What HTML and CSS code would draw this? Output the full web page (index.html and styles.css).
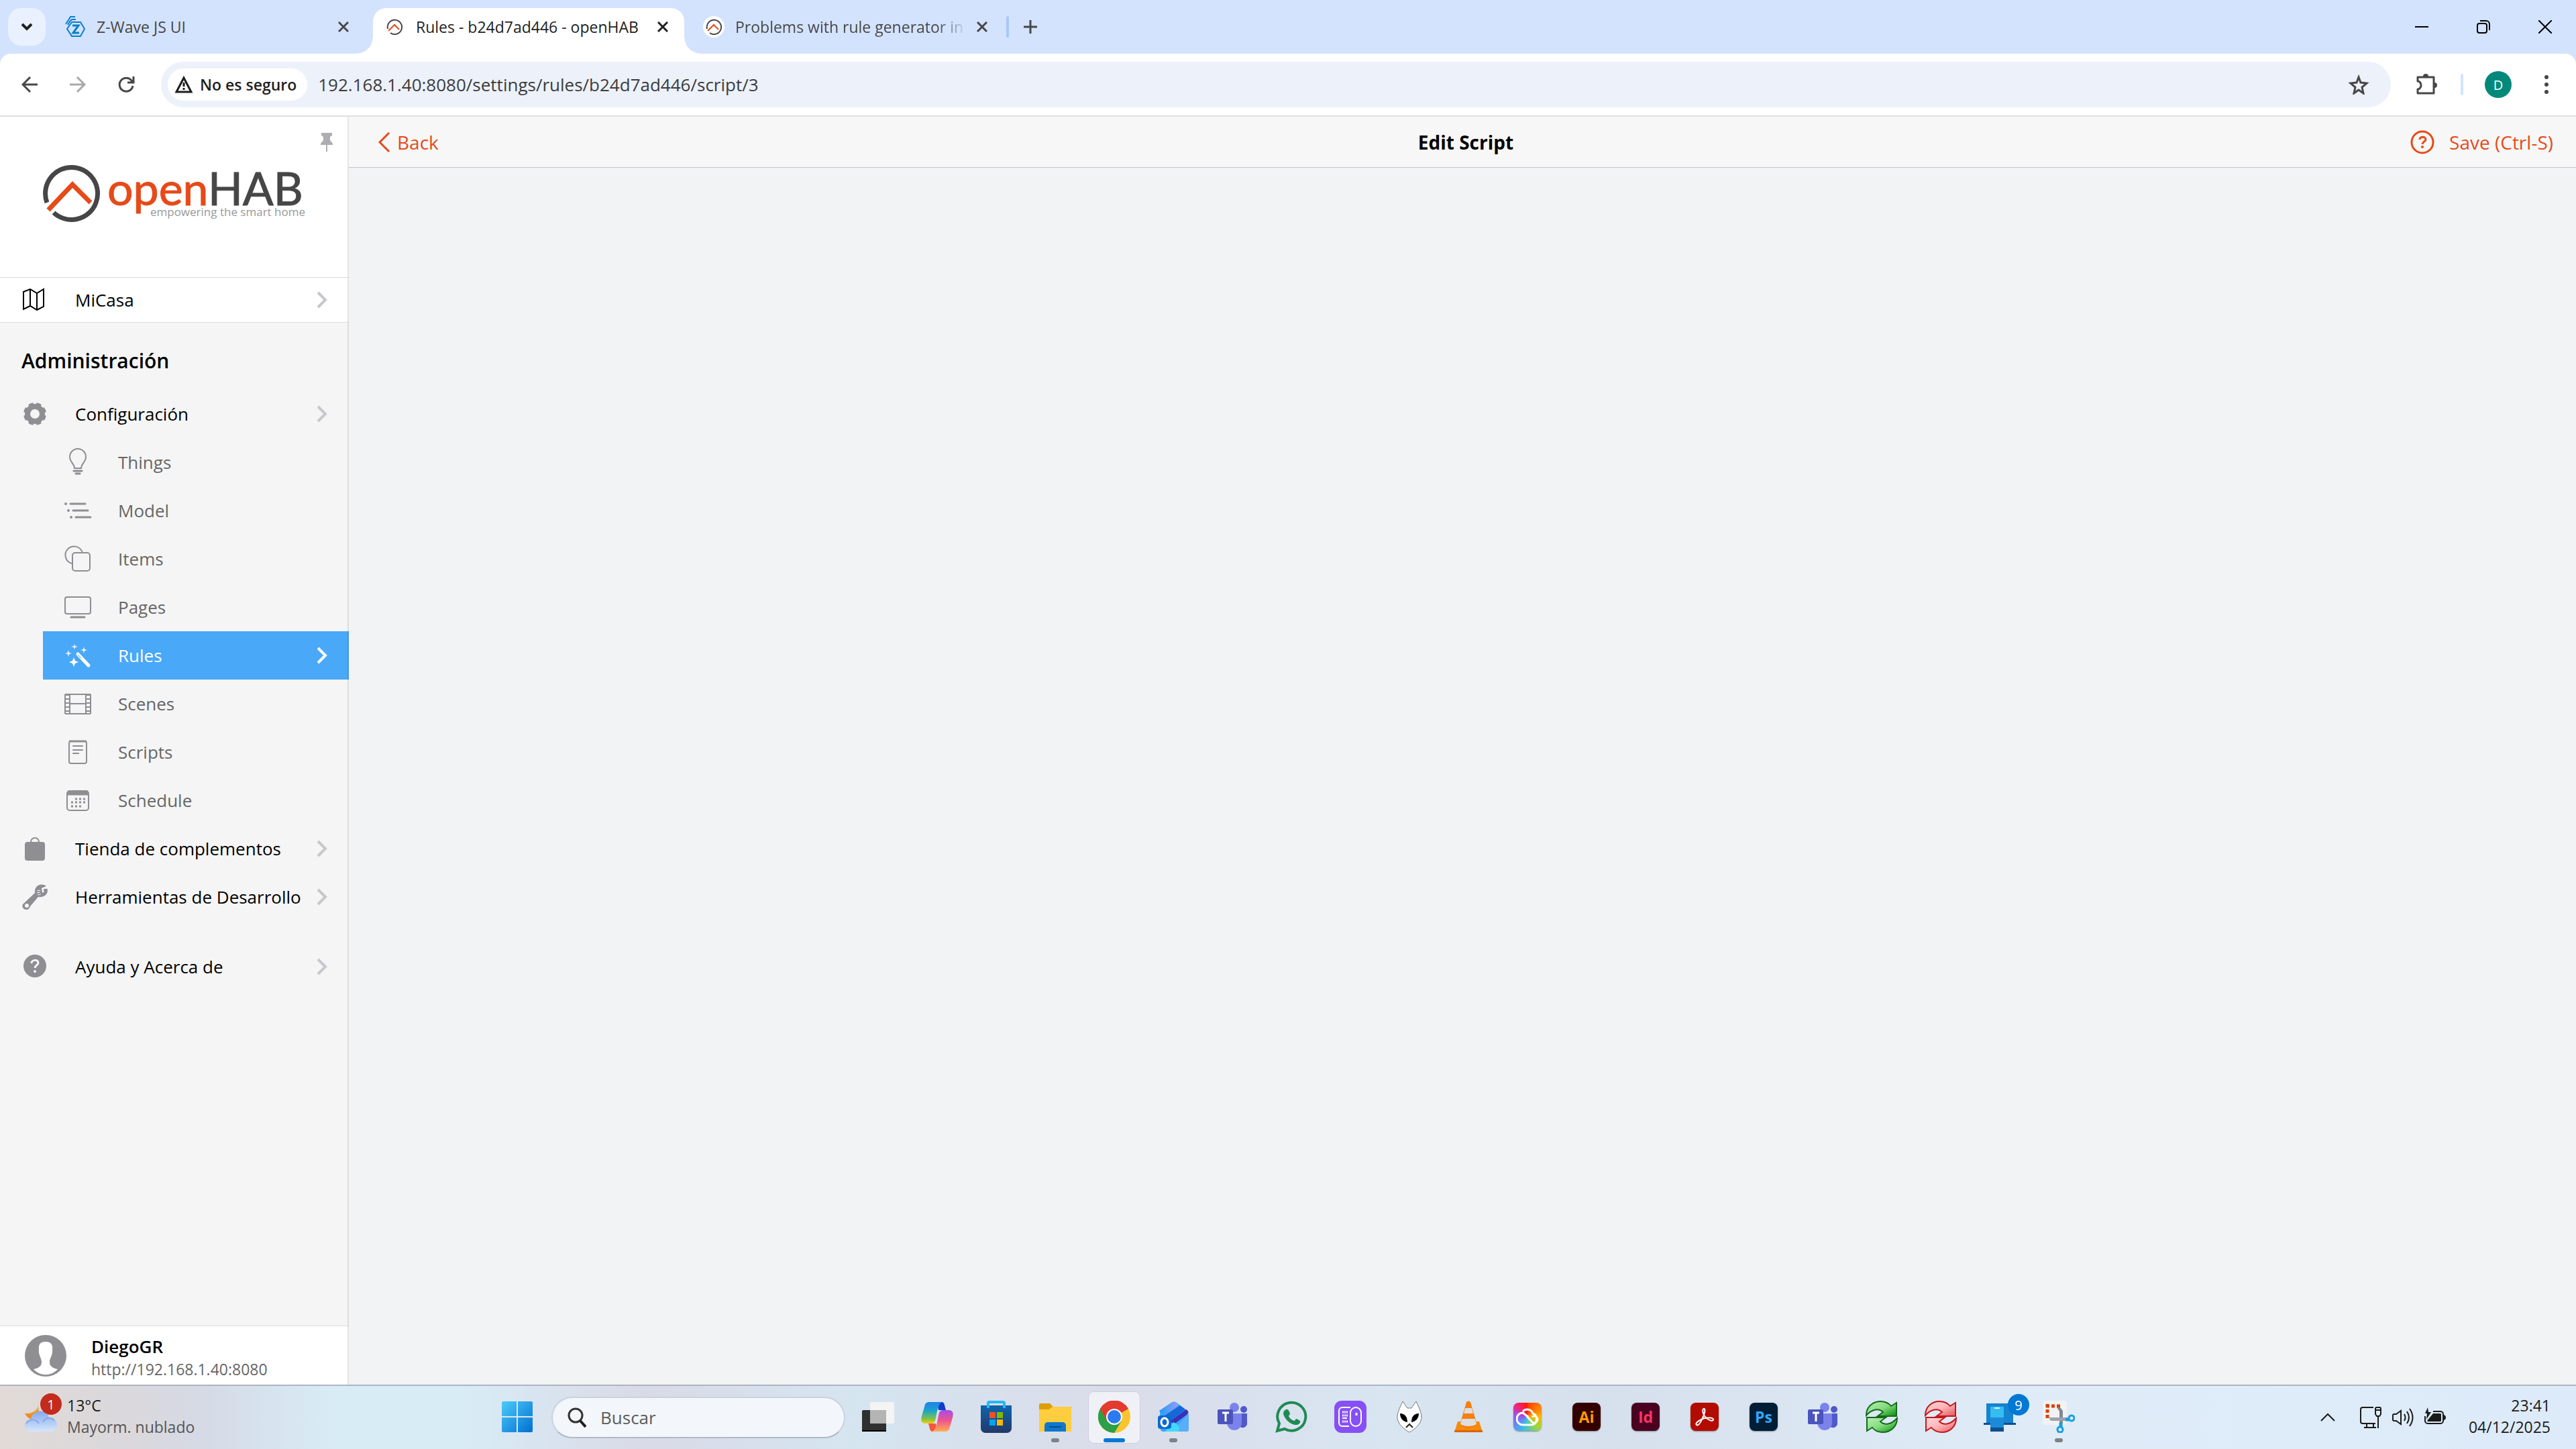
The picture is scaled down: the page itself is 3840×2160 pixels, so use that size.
FILE: index.html
```
<!DOCTYPE html>
<html lang="es">
	<head>
		<title>Rules - b24d7ad446 - openHAB</title>
		<meta charset="UTF-8">
		<meta name="viewport" content="width=device-width, initial-scale=1.0">
		<link rel="stylesheet" href="styles.css">
	</head>
	<body>
		<!-- shared icons -->
		<svg class="sprite" aria-hidden="true">
			<defs>
				<linearGradient id="green" x1="0" y1="0" x2="1" y2="1"><stop offset="0" stop-color="#b9f0b4"/><stop offset=".5" stop-color="#86dc80"/><stop offset="1" stop-color="#078a0b"/></linearGradient>
				<linearGradient id="red" x1="0" y1="0" x2="1" y2="1"><stop offset="0" stop-color="#ffd9da"/><stop offset=".5" stop-color="#ffb5b8"/><stop offset="1" stop-color="#e2545a"/></linearGradient>
			</defs>
			<symbol id="i-close" viewBox="0 0 16 16"><path d="M1 1l14 14M15 1L1 15" fill="none" stroke="currentColor" stroke-width="3"/></symbol>
			<symbol id="i-chevron" viewBox="0 0 16 26"><path d="M2 2l11 11L2 24" fill="none" stroke="currentColor" stroke-width="4"/></symbol>
			<symbol id="i-openhab" viewBox="0 0 24 24">
				<path d="M2 15A10.700 10.700 0 1 1 6 21" fill="none" stroke="#464646" stroke-width="2"/>
				<path d="M3 18l9-9 7 7" fill="none" stroke="#e64a19" stroke-width="2"/>
			</symbol>
			<symbol id="i-teams" viewBox="0 0 48 48">
				<circle cx="27" cy="10" r="7" fill="#7b83eb"/>
				<circle cx="41" cy="13" r="5" fill="#5059c9"/>
				<path d="M33 19h13v13a6 6 0 0 1-13 3z" fill="#5059c9"/>
				<path d="M16 19h22v14a11 11 0 0 1-22 0z" fill="#7b83eb"/>
				<rect x="2" y="13" width="23" height="22" rx="2" fill="#4b53bc"/>
				<path d="M9 18h10M14 18v13" stroke="#fff" stroke-width="3" fill="none"/>
			</symbol>
			<symbol id="i-sync" viewBox="0 0 48 48">
				<path d="M1 22C1 8 12 1 22 1c7 0 12 2 16 7l8-5v20H18l8-6c-6-6-16-5-25 5z" stroke-width="2"/>
				<path d="M47 26C47 40 36 47 26 47c-7 0-12-2-16-7l-8 5V25h28l-8 6c6 6 16 5 25-5z" stroke-width="2"/>
			</symbol>
		</svg>

		<div class="browser">
			<div class="tabstrip">
				<button class="tab-search" aria-label="Buscar pestañas">
					<svg width="18" height="14" viewBox="0 0 18 14"><path d="M2 3l7 7 7-7" fill="none" stroke="#1f1f1f" stroke-width="4"/></svg>
				</button>
				<div class="tab tab-first">
					<svg class="favicon" viewBox="0 0 32 32" fill="none" stroke="#0b7fc9" stroke-width="2">
						<path d="M11 9h13l6 10-6 11H11L4 19z"/><path d="M2 12L6 6l3-5h7M5 13l3-5 3-3h6"/><path d="M12 14h9l-8 11h9" stroke-width="3"/>
					</svg>
					<span class="tab-title">Z-Wave JS UI</span>
					<button class="tab-close" aria-label="Cerrar"><svg width="16" height="16"><use href="#i-close"/></svg></button>
				</div>
				<div class="tab tab-active">
					<svg class="favicon" viewBox="-4 -4 32 32"><use href="#i-openhab" width="24" height="24"/></svg>
					<span class="tab-title">Rules - b24d7ad446 - openHAB</span>
					<button class="tab-close" aria-label="Cerrar"><svg width="16" height="16"><use href="#i-close"/></svg></button>
				</div>
				<div class="tab tab-last">
					<svg class="favicon" viewBox="-4 -4 32 32"><circle cx="12" cy="12" r="16" fill="#fff"/><use href="#i-openhab" width="24" height="24"/></svg>
					<span class="tab-title tab-fade">Problems with rule generator in</span>
					<button class="tab-close" aria-label="Cerrar"><svg width="16" height="16"><use href="#i-close"/></svg></button>
				</div>
				<span class="tab-divider"></span>
				<button class="tab-new" aria-label="Nueva pestaña">
					<svg width="20" height="20" viewBox="0 0 20 20"><path d="M10 0v20M0 10h20" stroke="#474747" stroke-width="3"/></svg>
				</button>
				<div class="window-buttons">
					<button aria-label="Minimizar"><svg width="20" height="20"><path d="M0 10h20" stroke="#000" stroke-width="2"/></svg></button>
					<button aria-label="Restaurar"><svg width="20" height="20" fill="none" stroke="#000" stroke-width="2"><rect x="1" y="5" width="14" height="14" rx="3"/><path d="M5 1h9a5 5 0 0 1 5 5v9"/></svg></button>
					<button aria-label="Cerrar ventana"><svg width="20" height="20"><path d="M0 0l20 20M20 0L0 20" stroke="#000" stroke-width="2"/></svg></button>
				</div>
			</div>

			<div class="toolbar">
				<button class="tool" aria-label="Atrás"><svg width="24" height="24" viewBox="0 0 24 24" fill="none" stroke="#474747" stroke-width="3"><path d="M24 12H2M13 1L2 12l11 11"/></svg></button>
				<button class="tool" aria-label="Adelante"><svg width="24" height="24" viewBox="0 0 24 24" fill="none" stroke="#a9a9a9" stroke-width="3"><path d="M0 12h22M11 1l11 11-11 11"/></svg></button>
				<button class="tool" aria-label="Recargar"><svg width="26" height="26" viewBox="0 0 26 26" fill="none" stroke="#474747" stroke-width="3"><path d="M23 15a10 10 0 1 1-2-8l2 3M24 1v9h-9"/></svg></button>
				<div class="omnibox">
					<button class="chip">
						<svg width="28" height="26" viewBox="0 0 28 26"><path d="M14 3L3 24h22z" fill="none" stroke="#1f1f1f" stroke-width="3"/><path d="M14 10v6M14 18v3" stroke="#1f1f1f" stroke-width="3"/></svg>
						No es seguro
					</button>
					<input class="url" type="text" aria-label="Dirección" value="192.168.1.40:8080/settings/rules/b24d7ad446/script/3">
					<button class="star" aria-label="Añadir a marcadores"><svg width="32" height="30" viewBox="0 0 32 30"><path d="M16 4l3 8 9 1-7 6 2 9-7-5-7 5 2-9-7-6 9-1z" fill="none" stroke="#474747" stroke-width="3"/></svg></button>
				</div>
				<button class="tool-ext" aria-label="Extensiones"><svg width="34" height="34" viewBox="0 0 34 34"><path d="M4 6h24v24H4v-6a5 6 0 0 0 0-12z" fill="none" stroke="#474747" stroke-width="3" stroke-linejoin="round"/><path d="M12 5a4 4 0 0 1 8 0zM29 14a4 4 0 0 1 0 8z" fill="#474747"/></svg></button>
				<span class="tool-divider"></span>
				<button class="profile">D</button>
				<button class="dots" aria-label="Menú"><svg width="6" height="28" fill="#474747"><circle cx="3" cy="3" r="3"/><circle cx="3" cy="14" r="3"/><circle cx="3" cy="25" r="3"/></svg></button>
			</div>
		</div>

		<div class="app">
			<aside class="sidebar">
				<div class="brand">
					<button class="pin" aria-label="Fijar"><svg width="18" height="28" viewBox="0 0 18 28" fill="#aeaeb2"><path d="M1 0h16v4l-3 2v5l4 5v2H0v-2l4-5V6L1 4z"/><path d="M8 18h2v10H8z"/></svg></button>
					<svg class="logo" width="400" height="100" viewBox="0 0 400 100">
						<path d="M10 62A39 39 0 1 1 20 77" fill="none" stroke="#464646" stroke-width="7"/>
						<path d="M12 73l36-38 27 27" fill="none" stroke="#e64a19" stroke-width="7"/>
						<text x="100" y="66" class="logo-name"><tspan fill="#e64a19" stroke="#e64a19">open</tspan><tspan fill="#464646" stroke="#464646">HAB</tspan></text>
						<text x="395" y="82" text-anchor="end" class="logo-tag">empowering the smart home</text>
					</svg>
				</div>
				<a href="#" class="row row-home">
					<svg class="row-icon" viewBox="2 0 48 48"><path d="M9 12l10-4 10 6 10-6v26l-10 5-10-6-10 5zM19 8v25M29 14v25" fill="none" stroke="#000" stroke-width="2"/></svg>
					<span>MiCasa</span><svg class="row-arrow"><use href="#i-chevron"/></svg>
				</a>
				<nav>
					<h2>Administración</h2>
					<a href="#" class="row">
						<svg class="row-icon" viewBox="0 0 48 48"><circle cx="24" cy="24" r="11" fill="none" stroke="#8e8e93" stroke-width="8"/><circle cx="24" cy="24" r="15" fill="none" stroke="#8e8e93" stroke-width="4" pathLength="16" stroke-dasharray="1.200 .8" stroke-dashoffset="-.4"/></svg>
						<span>Configuración</span><svg class="row-arrow"><use href="#i-chevron"/></svg>
					</a>
					<a href="#" class="row sub">
						<svg class="row-icon" viewBox="0 0 48 48" fill="none" stroke="#8e8e93" stroke-width="2"><path d="M19 33c0-7-7-9-7-17a12 12 0 0 1 24 0c0 8-7 10-7 17z"/><path d="M18 37h12M21 41h6" stroke-width="3" stroke-linecap="round"/></svg>
						<span>Things</span>
					</a>
					<a href="#" class="row sub">
						<svg class="row-icon" viewBox="0 0 48 48" fill="none" stroke="#8e8e93" stroke-width="3" stroke-linecap="round"><path d="M13 14h22M17 24h22M21 34h22"/><path d="M6 14h0M10 24h0M14 34h0" stroke-width="4"/></svg>
						<span>Model</span>
					</a>
					<a href="#" class="row sub">
						<svg class="row-icon" viewBox="0 0 48 48" fill="none" stroke="#8e8e93" stroke-width="2"><path d="M15 31A13 13 0 1 1 31 15"/><rect x="16" y="15" width="26" height="27" rx="4"/></svg>
						<span>Items</span>
					</a>
					<a href="#" class="row sub">
						<svg class="row-icon" viewBox="0 0 48 48" fill="none" stroke="#8e8e93" stroke-width="2"><rect x="5" y="9" width="38" height="25" rx="3"/><path d="M14 39h20" stroke-width="3" stroke-linecap="round"/></svg>
						<span>Pages</span>
					</a>
					<a href="#" class="row sub selected">
						<svg class="row-icon" viewBox="0 0 48 48" fill="#fff"><path d="M19 7l1 3 4 1-4 1-1 3-1-3-4-1 4-1zM33 11l1 4 4 1-4 1-1 4-1-4-4-1 4-1zM10 16l1 4 4 1-4 1-1 4-1-4-4-1 4-1zM18 27l2 5 5 2-5 2-2 5-2-5-5-2 5-2z"/><path d="M24 22l16 17" stroke="#fff" stroke-width="5" stroke-linecap="round"/><path d="M24 23l5 5" stroke="#49a8f8" stroke-width="1"/></svg>
						<span>Rules</span><svg class="row-arrow"><use href="#i-chevron"/></svg>
					</a>
					<a href="#" class="row sub">
						<svg class="row-icon" viewBox="0 0 48 48" fill="none" stroke="#8e8e93" stroke-width="2"><rect x="5" y="10" width="38" height="29" rx="1"/><path d="M12 10v29M36 10v29M12 24h24"/><path d="M8 10v29M40 10v29" stroke-width="6" stroke-dasharray="2 4"/></svg>
						<span>Scenes</span>
					</a>
					<a href="#" class="row sub">
						<svg class="row-icon" viewBox="0 0 48 48" fill="none" stroke="#8e8e93" stroke-width="2"><rect x="11" y="8" width="26" height="33" rx="3"/><path d="M11 8h26" stroke-width="3"/><path d="M17 15h14M17 21h14M17 26h8" stroke-linecap="round"/></svg>
						<span>Scripts</span>
					</a>
					<a href="#" class="row sub">
						<svg class="row-icon" viewBox="0 0 48 48" fill="none" stroke="#8e8e93" stroke-width="2"><rect x="8" y="10" width="32" height="29" rx="4"/><path d="M9 13h30" stroke-width="7"/><path d="M20 22h15M14 27h21M14 33h15" stroke-width="3" stroke-dasharray="3 3"/></svg>
						<span>Schedule</span>
					</a>
					<a href="#" class="row">
						<svg class="row-icon" viewBox="0 0 48 48"><rect x="9" y="14" width="30" height="28" rx="4" fill="#8e8e93"/><path d="M18 15v-1a6 6 0 0 1 12 0v1" fill="none" stroke="#8e8e93" stroke-width="2"/></svg>
						<span>Tienda de complementos</span><svg class="row-arrow"><use href="#i-chevron"/></svg>
					</a>
					<a href="#" class="row">
						<svg class="row-icon" viewBox="0 0 48 48"><path d="M6 35l18-17C23 8 32 2 41 8l-7 3 1 7 8-4c0 7-6 11-14 10L17 38c-1 5-6 6-9 4-3-2-3-5-2-7z" fill="#8e8e93"/><circle cx="12" cy="37" r="3" fill="#f5f5f5"/><path d="M27 15l5-1M27 18l5-1M28 21l5-1" stroke="#f5f5f5"/><path d="M37 12l6 0-1 4-4 3z" fill="#8e8e93"/></svg>
						<span>Herramientas de Desarrollo</span><svg class="row-arrow"><use href="#i-chevron"/></svg>
					</a>
					<a href="#" class="row row-help">
						<svg class="row-icon" viewBox="0 0 48 48"><circle cx="24" cy="23" r="17" fill="#8e8e93"/><path d="M19 19c0-6 10-6 10-1 0 4-5 4-5 8" fill="none" stroke="#f5f5f5" stroke-width="3"/><circle cx="24" cy="31" r="2" fill="#f5f5f5"/></svg>
						<span>Ayuda y Acerca de</span><svg class="row-arrow"><use href="#i-chevron"/></svg>
					</a>
				</nav>
				<a href="#" class="user">
					<svg width="62" height="62" viewBox="0 0 62 62"><circle cx="31" cy="31" r="31" fill="#8e8e93"/><path d="M31 10c7 0 11 4 10 11 1 10-4 13-4 19 0 5 2 9 12 11-10 11-26 11-36 0 10-2 12-6 12-11 0-6-5-9-4-19-1-7 3-11 10-11z" fill="#fff"/></svg>
					<span class="user-text"><strong>DiegoGR</strong><small>http://192.168.1.40:8080</small></span>
				</a>
			</aside>
			<main>
				<header class="navbar">
					<a href="#" class="nav-link nav-back"><svg width="18" height="30" viewBox="0 0 18 30"><path d="M16 1L2 15l14 14" fill="none" stroke="#e64a19" stroke-width="3"/></svg>Back</a>
					<h1>Edit Script</h1>
					<div class="nav-right">
						<a href="#" class="nav-link" aria-label="Ayuda"><svg width="36" height="36" viewBox="0 0 36 36"><circle cx="18" cy="18" r="16" fill="none" stroke="#e64a19" stroke-width="3"/><path d="M14 14c0-5 9-5 9 0 0 3-5 3-5 7" fill="none" stroke="#e64a19" stroke-width="3"/><circle cx="18" cy="25" r="2" fill="#e64a19"/></svg></a>
						<a href="#" class="nav-link">Save (Ctrl-S)</a>
					</div>
				</header>
			</main>
		</div>

		<footer class="taskbar">
			<button class="weather">
				<span class="weather-icon">
					<svg width="48" height="48" viewBox="0 0 48 48">
						<defs><linearGradient id="cloud" x1="0" y1="0" x2="0" y2="1"><stop offset="0" stop-color="#84a9ee"/><stop offset="1" stop-color="#d6e6fb"/></linearGradient><linearGradient id="moon" x1="0" y1="0" x2="0" y2="1"><stop offset="0" stop-color="#f7c530"/><stop offset="1" stop-color="#ee7f1c"/></linearGradient></defs>
						<path d="M19 0c3 10-4 19-19 18 4 8 13 12 22 5z" fill="url(#moon)"/>
						<path d="M9 45a9 9 0 0 1 0-18C11 12 32 10 36 24c15-1 16 21 2 21z" fill="url(#cloud)"/>
						<path d="M2 33c5-8 15-7 19 0M27 31c3-7 11-8 17-3" fill="none" stroke="#86a8ea" stroke-width="2"/>
					</svg>
					<span class="badge badge-red">1</span>
				</span>
				<span class="weather-text"><span>13°C</span><span class="muted">Mayorm. nublado</span></span>
			</button>

			<div class="apps">
				<button class="task" aria-label="Inicio"><svg width="46" height="46" viewBox="0 0 46 46"><defs><linearGradient id="win" x1="0" y1="0" x2="1" y2="1"><stop offset="0" stop-color="#4ccbfb"/><stop offset="1" stop-color="#0070cf"/></linearGradient></defs><path d="M2 0h20v22H0V2a2 2 0 0 1 2-2zM24 0h20a2 2 0 0 1 2 2v20H24zM0 24h22v22H2a2 2 0 0 1-2-2zM24 24h22v20a2 2 0 0 1-2 2H24z" fill="url(#win)"/></svg></button>
				<label class="search">
					<svg width="28" height="30" viewBox="0 0 28 30"><circle cx="12" cy="12" r="10" fill="none" stroke="#333" stroke-width="3"/><path d="M19 20l8 9" stroke="#1f1f1f" stroke-width="4"/></svg>
					<input type="text" placeholder="Buscar" aria-label="Buscar">
				</label>
				<button class="task" aria-label="Vista de tareas"><svg width="48" height="48" viewBox="0 0 48 48"><rect x="0" y="14" width="36" height="32" rx="2" fill="#303030"/><path d="M0 44h36v2H0z" fill="#000"/><rect x="12" y="2" width="36" height="32" rx="2" fill="#f4f4f4"/><path d="M12 14h24v20H12z" fill="#b4b4b4"/></svg></button>
				<button class="task" aria-label="Copilot"><svg width="48" height="48" viewBox="0 0 48 48"><defs><linearGradient id="cp1" x1="0" y1="0" x2="0" y2="1"><stop offset="0" stop-color="#2480e8"/><stop offset=".4" stop-color="#18a5cb"/><stop offset=".8" stop-color="#86c440"/><stop offset="1" stop-color="#f8cb18"/></linearGradient><linearGradient id="cp2" x1="0" y1="0" x2="0" y2="1"><stop offset="0" stop-color="#a64be8"/><stop offset=".5" stop-color="#f0558b"/><stop offset="1" stop-color="#fcb055"/></linearGradient></defs><path d="M24 2h7c4 0 4 5 6 12H26z" fill="#0f3cc9"/><path d="M24 46h-7c-4 0-4-5-6-12h11z" fill="#f4573a"/><path d="M12 2h19c-6 4-7 14-9 24-1 6-3 8-7 8H7c-6 0-8-4-6-11L5 9c1-5 3-7 7-7z" fill="url(#cp1)"/><path d="M36 46H17c6-4 7-14 9-24 1-6 3-8 7-8h8c6 0 8 4 6 11l-4 14c-1 5-3 7-7 7z" fill="url(#cp2)"/></svg></button>
				<button class="task" aria-label="Microsoft Store"><svg width="48" height="48" viewBox="0 0 48 48"><defs><linearGradient id="store" x1="0" y1="0" x2="0" y2="1"><stop offset="0" stop-color="#0f65ad"/><stop offset="1" stop-color="#22386a"/></linearGradient></defs><path d="M1 7h46v34a7 7 0 0 1-7 7H8a7 7 0 0 1-7-7z" fill="url(#store)"/><path d="M12 11V4a2 2 0 0 1 2-2h20a2 2 0 0 1 2 2v7" fill="none" stroke="#22b8f5" stroke-width="4"/><path d="M14 17h9v9h-9z" fill="#f25022"/><path d="M25 17h9v9h-9z" fill="#7fba00"/><path d="M14 28h9v9h-9z" fill="#00a4ef"/><path d="M25 28h9v9h-9z" fill="#ffb900"/></svg></button>
				<button class="task running" aria-label="Explorador de archivos"><svg width="48" height="48" viewBox="0 0 48 48"><path d="M0 6a2 2 0 0 1 2-2h14l5 5h27v8H0z" fill="#dd9f08"/><path d="M0 13h15l5-4h26a2 2 0 0 1 2 2v35H0z" fill="#fecd40"/><path d="M8 46V37a5 5 0 0 1 5-5h22a5 5 0 0 1 5 5v9z" fill="#0f78ca"/><path d="M15 39h18" stroke="#0c4a91" stroke-width="2"/></svg></button>
				<button class="task current" aria-label="Google Chrome"><svg width="48" height="48" viewBox="0 0 48 48"><circle cx="24" cy="24" r="24" fill="#fcc42c"/><path d="M24 24L3 12a24 24 0 0 1 42 0z" fill="#e33b2e"/><path d="M3 12a24 24 0 0 0 21 36l11-18-11-6z" fill="#2c9f47"/><path d="M24 12h21a24 24 0 0 0-42 0l10 18z" fill="#e33b2e"/><circle cx="24" cy="24" r="12" fill="#fff"/><circle cx="24" cy="24" r="10" fill="#2b7bf0"/></svg></button>
				<button class="task running" aria-label="Outlook"><svg width="48" height="48" viewBox="0 0 48 48"><defs><linearGradient id="ol" x1="0" y1="0" x2="1" y2="0"><stop offset="0" stop-color="#1e9bf7"/><stop offset="1" stop-color="#9a9df8"/></linearGradient></defs><path d="M4 15L21 3c3-2 5-2 8 0l16 12v27a4 4 0 0 1-4 4H9a4 4 0 0 1-4-4z" fill="#3aa5f7"/><path d="M3 15L21 3c3-2 6-1 8 1l3 3-22 16z" fill="url(#ol)"/><path d="M10 23L34 7l8 6-23 18z" fill="#1767d8"/><path d="M19 31l24-18c5 3 4 6 1 8L25 35z" fill="#3a30b8"/><path d="M22 46l25-27v24a3 3 0 0 1-3 3z" fill="#58aef8"/><path d="M12 46l12-14c9 4 11 9 7 14z" fill="#44d8fb"/><rect x="1" y="22" width="20" height="20" rx="4" fill="#0d69cf"/><ellipse cx="11" cy="32" rx="5" ry="6" fill="none" stroke="#fff" stroke-width="3"/></svg></button>
				<button class="task" aria-label="Teams"><svg width="48" height="48"><use href="#i-teams"/></svg></button>
				<button class="task" aria-label="WhatsApp"><svg width="48" height="48" viewBox="0 0 48 48"><path d="M3 45l3-11a21 21 0 1 1 8 8z" fill="none" stroke="#1f8a53" stroke-width="4"/><path d="M16 13c3-1 4 1 6 6 0 2-2 3-2 4 2 4 5 6 8 7 2 0 2-3 4-3l5 3c1 4-3 6-6 6-9 0-18-10-19-17 0-3 2-5 4-6z" fill="#1f8a53"/></svg></button>
				<button class="task" aria-label="Control"><svg width="48" height="48" viewBox="0 0 48 48" fill="none" stroke="#fff" stroke-width="2"><rect width="48" height="48" rx="11" fill="#8650f6" stroke="none"/><path d="M22 38H12a5 5 0 0 1-5-5V15a5 5 0 0 1 5-5h12"/><rect x="24" y="10" width="16" height="28" rx="8"/><path d="M33 18v4" stroke-width="3"/><path d="M12 17h9M12 22h9M12 31h9" stroke-width="3" stroke-dasharray="2 1"/><path d="M12 26h7" stroke-width="2"/></svg></button>
				<button class="task" aria-label="foobar2000"><svg width="48" height="48" viewBox="0 0 48 48"><path d="M14 1l7 10h6l7-10c3 7 8 15 8 24 0 10-11 18-18 22C17 43 6 35 6 25 6 16 11 8 14 1z" fill="#fff" stroke="#777"/><path d="M10 19c7 0 11 5 11 13-6-1-11-5-11-13zM38 19c-7 0-11 5-11 13 6-1 11-5 11-13z" fill="#000"/><path d="M19 40l5-5 5 5" fill="none" stroke="#222" stroke-width="2"/></svg></button>
				<button class="task" aria-label="VLC"><svg width="48" height="48" viewBox="0 0 48 48"><path d="M8 31h32l5 16H3z" fill="#f88a0c"/><path d="M3 44h42v3H3z" fill="#db6500"/><path d="M21 2q3-3 6 0l10 34c-4 6-22 6-26 0z" fill="#f58011"/><path d="M19 11h10l2 8H17zM14 27h20l2 8c-6 4-18 4-24 0z" fill="#dedede"/></svg></button>
				<button class="task" aria-label="Creative Cloud"><span class="tile tile-cc"><svg width="34" height="28" viewBox="0 0 34 28" fill="none" stroke="#fff" stroke-width="3"><path d="M10 6a9 9 0 0 1 15 3 9 9 0 0 1-1 17H10a9 9 0 1 1 0-18l8 6M24 14a5 5 0 1 1 0 8L14 11"/></svg></span></button>
				<button class="task" aria-label="Illustrator"><span class="tile tile-ai">Ai</span></button>
				<button class="task" aria-label="InDesign"><span class="tile tile-id">Id</span></button>
				<button class="task" aria-label="Acrobat"><span class="tile tile-pdf"><svg width="28" height="28" viewBox="0 0 28 28" fill="none" stroke="#fff" stroke-width="2"><path d="M2 26c-3-3 6-8 12-10 5-1 13-1 13 2 0 4-8 1-12-4-4-4-5-12-2-12s1 8-3 16c-2 5-6 10-8 8z"/></svg></span></button>
				<button class="task" aria-label="Photoshop"><span class="tile tile-ps">Ps</span></button>
				<button class="task" aria-label="Teams trabajo"><svg width="48" height="48"><use href="#i-teams"/></svg></button>
				<button class="task" aria-label="Sincronizar"><svg width="48" height="48" fill="url(#green)" stroke="#126b1a"><use href="#i-sync"/></svg></button>
				<button class="task" aria-label="Detener sincronización"><svg width="48" height="48" fill="url(#red)" stroke="#c4161c"><use href="#i-sync"/></svg></button>
				<button class="task" aria-label="Enlace móvil"><svg width="48" height="48" viewBox="0 0 48 48"><path d="M4 4h40v29H4z" fill="#1583d0"/><path d="M0 33h48v3H0z" fill="#0b4f8c"/><rect x="10" y="8" width="20" height="38" rx="1" fill="#1b8bd8"/><path d="M10 9h20v16H10z" fill="#35bdf1"/><path d="M10 40h20v6H10z" fill="#0e4e8d"/><path d="M16 11h8" stroke="#d9f5ff" stroke-width="2"/></svg><span class="badge badge-blue">9</span></button>
				<button class="task running" aria-label="Recortes"><svg width="48" height="48" viewBox="0 0 48 48"><rect x="0" y="0" width="36" height="36" rx="4" fill="#f2f2f2"/><path d="M5 8h21" stroke="#d8410c" stroke-width="5" stroke-dasharray="5 3"/><path d="M7 5v21" stroke="#d8410c" stroke-width="5" stroke-dasharray="5 3"/><path d="M21 10h5l4 5v19h-5V16z" fill="#7e8893"/><path d="M9 25h28v5H12z" fill="#9aa3ad"/><circle cx="43" cy="26" r="4" fill="none" stroke="#159fe0" stroke-width="3"/><circle cx="26" cy="43" r="4" fill="none" stroke="#159fe0" stroke-width="3"/><path d="M27 33v6M34 28h5" stroke="#159fe0" stroke-width="5"/></svg></button>
			</div>

			<div class="tray">
				<button aria-label="Mostrar iconos ocultos"><svg width="22" height="14" viewBox="0 0 22 14"><path d="M1 12L11 2l10 10" fill="none" stroke="#1a1a1a" stroke-width="2"/></svg></button>
				<button class="tray-status" aria-label="Red, volumen y batería">
					<svg width="32" height="32" viewBox="0 0 32 32" fill="none" stroke="#1a1a1a" stroke-width="2"><path d="M20 1H4a3 3 0 0 0-3 3v18a3 3 0 0 0 3 3h19M10 25v5M20 25v5M6 31h18M27 14v18M23 3q0-2 2-2h4q2 0 2 2v8l-2 3h-4l-2-3zM23 5h8"/></svg>
					<svg width="32" height="32" viewBox="0 0 32 32" fill="none" stroke="#1a1a1a" stroke-width="2"><path d="M13 6v20l-7-5H3q-2 0-2-2v-6q0-2 2-2h3zM18 11q3 5 0 10M22 7q6 9 0 18M26 3q9 13 0 26"/></svg>
					<svg width="32" height="32" viewBox="0 0 32 32"><path d="M13 7h11a4 4 0 0 1 4 4v10a4 4 0 0 1-4 4H5a4 4 0 0 1-4-4v-7" fill="none" stroke="#1a1a1a" stroke-width="2"/><path d="M13 10h11l1 1v10l-1 1H5l-1-1zM29 12q3 1 3 4t-3 4zM5 1L1 10h3l-1 9 7-11H6z" fill="#1a1a1a"/></svg>
				</button>
				<button class="clock"><span>23:41</span><span>04/12/2025</span></button>
			</div>
		</footer>
	</body>
</html>
```
FILE: styles.css
```
* {
	box-sizing: border-box;
}
body {
	margin: 0;
	min-height: 100vh;
	display: flex;
	flex-direction: column;
	font-family: "Open Sans", "Noto Sans", sans-serif;
	font-size: 26px;
	color: #000;
	background: #f2f3f5;
}
button {
	font: inherit;
	color: inherit;
	background: none;
	border: none;
	padding: 0;
	display: flex;
	align-items: center;
	justify-content: center;
}
a {
	color: inherit;
	text-decoration: none;
}
input {
	font: inherit;
	border: none;
	outline: none;
	background: none;
	padding: 0;
	min-width: 0;
}
svg {
	flex: none;
	display: block;
}
.sprite {
	position: absolute;
	width: 0;
	height: 0;
}

/* tabs */
.browser {
	background: #d3e3fd;
}
.tabstrip {
	display: flex;
	align-items: center;
	height: 80px;
	padding-left: 12px;
	font-size: 23px;
	color: #474747;
}
.tab-search {
	width: 56px;
	height: 56px;
	border-radius: 20px;
	background: #eaf1fe;
}
.tab {
	display: flex;
	align-items: center;
	width: 464px;
	height: 68px;
	align-self: flex-end;
	padding: 0 24px 12px 16px;
	position: relative;
}
.tab-first {
	margin-left: 24px;
	padding-left: 4px;
	padding-right: 36px;
}
.tab-active {
	background: #fff;
	border-radius: 20px 20px 0 0;
	color: #1f1f1f;
}
.tab-active::before,
.tab-active::after {
	content: "";
	position: absolute;
	bottom: 0;
	width: 24px;
	height: 24px;
	background: radial-gradient(circle at 0 0, transparent 23px, #fff 24px);
}
.tab-active::before {
	left: -24px;
}
.tab-active::after {
	right: -24px;
	background: radial-gradient(circle at 100% 0, transparent 23px, #fff 24px);
}
.tab-last {
	padding-left: 28px;
	padding-right: 12px;
}
.favicon {
	width: 32px;
	height: 32px;
}
.tab-title {
	flex: 1;
	margin-left: 16px;
	white-space: nowrap;
}
.tab-fade {
	-webkit-mask-image: linear-gradient(90deg, #000 300px, transparent 346px);
	mask-image: linear-gradient(90deg, #000 300px, transparent 346px);
}
.tab-divider {
	width: 4px;
	height: 32px;
	margin-left: 16px;
	border-radius: 2px;
	background: #a8c7fa;
}
.tab-new {
	width: 64px;
	height: 56px;
}
.window-buttons {
	display: flex;
	margin-left: auto;
}
.window-buttons button {
	width: 92px;
	height: 80px;
}

/* address bar */
.toolbar {
	display: flex;
	align-items: center;
	height: 94px;
	padding: 0 8px;
	background: #fff;
	border-bottom: 2px solid #dfdfdf;
	border-radius: 16px 16px 0 0;
}
.tool {
	width: 72px;
	height: 68px;
}
.omnibox {
	flex: 1;
	display: flex;
	align-items: center;
	height: 68px;
	margin-left: 16px;
	padding: 0 32px 0 10px;
	border-radius: 34px;
	background: #ecf1fa;
}
.chip {
	height: 48px;
	padding: 0 16px 0 10px;
	gap: 10px;
	border-radius: 24px;
	background: #fff;
	font-size: 23px;
	font-weight: 600;
	color: #1f1f1f;
}
.url {
	flex: 1;
	margin-left: 16px;
	color: #3c3c3c;
}
.tool-ext {
	margin-left: 36px;
}
.tool-divider {
	width: 4px;
	height: 32px;
	margin: 0 32px 0 34px;
	border-radius: 2px;
	background: #d3e3fd;
}
.profile {
	width: 40px;
	height: 40px;
	border-radius: 50%;
	background: #00897b;
	color: #fff;
	font-size: 20px;
}
.dots {
	width: 24px;
	margin: 0 24px 0 40px;
}

/* openHAB */
.app {
	flex: 1;
	display: flex;
}
.sidebar {
	width: 520px;
	display: flex;
	flex-direction: column;
	background: #f5f5f5;
	position: relative;
}
.sidebar::after {
	content: "";
	position: absolute;
	top: 0;
	bottom: 0;
	right: 0;
	width: 2px;
	background: rgba(0,0,0,.1);
}
.brand {
	height: 240px;
	padding: 24px 24px 0 60px;
	background: #fff;
	border-bottom: 1px solid #dcdcdc;
}
.pin {
	margin-left: auto;
}
.logo {
	margin-top: 14px;
}
.logo-name {
	font-family: Lato, sans-serif;
	font-size: 68px;
}
.logo-tag {
	font-size: 17px;
	fill: #999;
}
.row {
	display: flex;
	align-items: center;
	height: 72px;
	padding: 0 32px 0 28px;
	white-space: nowrap;
}
.row span {
	flex: 1;
	margin-left: 36px;
}
.row-home {
	height: 67px;
	background: #fff;
	border-bottom: 1px solid #dcdcdc;
}
.row-icon {
	width: 48px;
	height: 48px;
}
.row-arrow {
	width: 16px;
	height: 26px;
	color: #c7c7cc;
}
.sub {
	margin-left: 64px;
	color: #666;
}
.selected {
	background: #49a8f8;
	color: #fff;
}
.selected .row-arrow {
	color: #fff;
}
.row-help {
	margin-top: 32px;
}
h2 {
	margin: 0;
	padding: 37px 32px 23px;
	font-size: 30px;
	line-height: 40px;
	font-weight: 600;
}
.user {
	display: flex;
	align-items: center;
	height: 88px;
	margin-top: auto;
	padding-left: 37px;
	gap: 37px;
	background: #fff;
	border-top: 1px solid #dcdcdc;
}
.user-text {
	display: flex;
	flex-direction: column;
	padding-top: 4px;
}
.user strong {
	font-weight: 600;
	line-height: 36px;
}
.user small {
	font-size: 23px;
	line-height: 32px;
	color: #666;
}
main {
	flex: 1;
}
.navbar {
	display: grid;
	grid-template-columns: 1fr auto 1fr;
	align-items: center;
	height: 76px;
	padding: 0 34px 0 44px;
	background: #f7f7f7;
	border-bottom: 1px solid #c4c4c4;
	font-size: 28px;
}
.navbar h1 {
	margin: 0;
	font-size: 28px;
	font-weight: 700;
}
.nav-link {
	display: flex;
	align-items: center;
	gap: 10px;
	color: #e64a19;
}
.nav-right {
	display: flex;
	justify-content: flex-end;
	gap: 22px;
}

/* windows taskbar */
.taskbar {
	display: grid;
	grid-template-columns: 1fr auto 1fr;
	align-items: center;
	height: 96px;
	border-top: 2px solid #adb5c0;
	background: linear-gradient(90deg, #e1dad7 0, #dad8dc 5%, #d5dae6 8%, #d8ecf6 13%, #d8ecf6 18%, #d9dae7 25%, #d5e5f0 33%, #dadce9 43%, #d8e6f2 54%, #d6e0ec 62%, #dfecf8 79%, #ddeaf9 100%);
	color: #1a1a1a;
	font-size: 23px;
}
.weather {
	justify-self: start;
	padding-left: 37px;
	gap: 15px;
}
.weather-icon {
	position: relative;
}
.badge {
	position: absolute;
	display: flex;
	align-items: center;
	justify-content: center;
	width: 32px;
	height: 32px;
	border-radius: 50%;
	color: #fff;
	font-size: 20px;
}
.badge-red {
	top: -12px;
	left: 23px;
	background: #c42b1c;
}
.badge-blue {
	top: 12px;
	right: 0;
	background: #0078d4;
}
.weather-text,
.clock {
	display: flex;
	flex-direction: column;
	align-items: flex-start;
	padding-bottom: 4px;
	line-height: 32px;
}
.muted {
	color: #555;
}
.apps {
	display: flex;
	align-items: center;
}
.task {
	width: 88px;
	height: 94px;
	padding-bottom: 2px;
	position: relative;
}
.running::after,
.current::after {
	content: "";
	position: absolute;
	bottom: 10px;
	left: 50%;
	width: 12px;
	height: 6px;
	margin-left: -6px;
	border-radius: 3px;
	background: #7d8287;
}
.current {
	width: 76px;
	height: 76px;
	margin: 0 6px;
	border-radius: 8px;
	background: rgba(255,255,255,.6);
	box-shadow: 0 0 0 1px rgba(0,0,0,.06);
}
.current::after {
	bottom: 1px;
	width: 32px;
	margin-left: -16px;
	background: #0078d4;
}
.search {
	display: flex;
	align-items: center;
	gap: 21px;
	width: 438px;
	height: 62px;
	margin: 0 5px 0 7px;
	padding: 0 22px;
	border: 2px solid #c8d3df;
	border-bottom-color: #b0bac6;
	border-radius: 31px;
	background: #f3f6fa;
}
.search input {
	flex: 1;
	font-size: 26px;
}
.search input::placeholder {
	color: #5c5c5c;
	opacity: 1;
}
.tile {
	display: flex;
	align-items: center;
	justify-content: center;
	width: 42px;
	height: 42px;
	border-radius: 8px;
	font-weight: 700;
	box-shadow: 0 1px 2px rgba(0,0,0,.4);
}
.tile-cc {
	background: conic-gradient(#ff3a00, #ffb400 25%, #9ad83a 38%, #36c0e8 55%, #8f5cf5 75%, #f0237a 88%, #ff1a00);
}
.tile-ai {
	background: #330000;
	color: #ff9a00;
}
.tile-id {
	background: #49021f;
	color: #ff3366;
}
.tile-pdf {
	background: #b30b00;
}
.tile-ps {
	background: #001e36;
	color: #31a8ff;
}
.tray {
	display: flex;
	align-items: center;
	justify-content: flex-end;
	padding-right: 38px;
}
.tray-status {
	gap: 16px;
	margin-left: 37px;
}
.clock {
	align-items: flex-end;
	margin-left: 34px;
}
```
